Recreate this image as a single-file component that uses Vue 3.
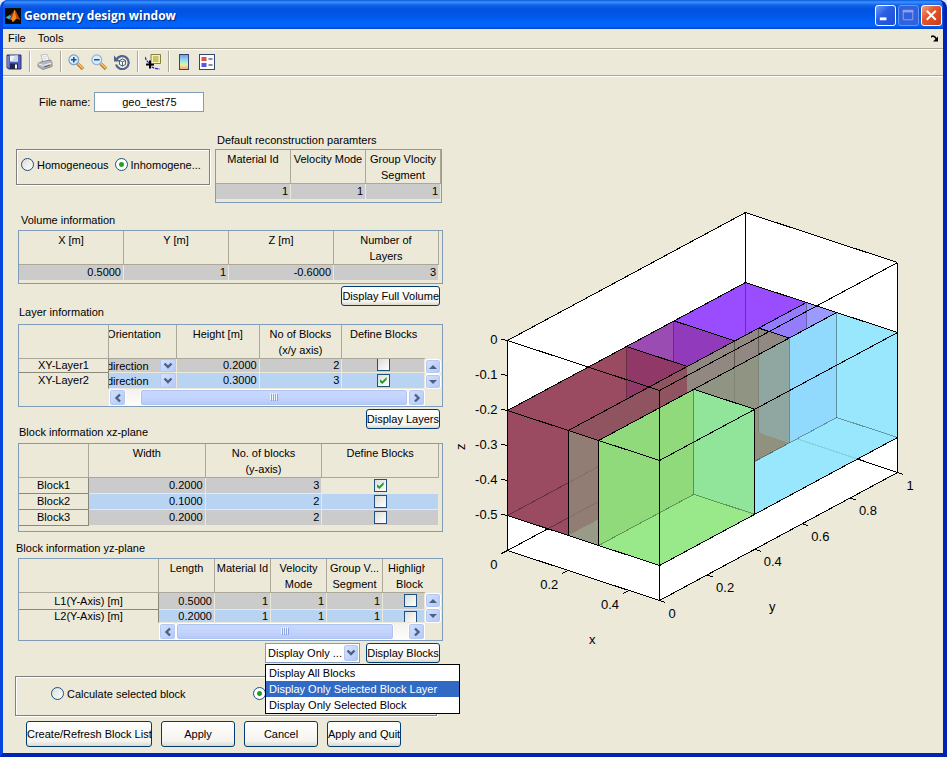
<script setup>
import { ref } from 'vue'

const fileName = ref('geo_test75')
const material = ref('inhomogeneous')
const scope = ref('all')
const view = ref('layer')

const viewOptions = [
  { id: 'all', label: 'Display All Blocks' },
  { id: 'layer', label: 'Display Only Selected Block Layer' },
  { id: 'block', label: 'Display Only Selected Block' }
]

const layers = ref([
  { name: 'XY-Layer1', height: '0.2000', blocks: 2, define: false },
  { name: 'XY-Layer2', height: '0.3000', blocks: 3, define: true }
])
const blocks = ref([
  { name: 'Block1', width: '0.2000', count: 3, define: true },
  { name: 'Block2', width: '0.1000', count: 2, define: false },
  { name: 'Block3', width: '0.2000', count: 2, define: false }
])
const segments = ref([
  { name: 'L1(Y-Axis) [m]', length: '0.5000', mark: false },
  { name: 'L2(Y-Axis) [m]', length: '0.2000', mark: false }
])

// Orthographic projection of volume coordinates (metres) to drawing units.
const px = (x, y) => 507.5 + 304 * x + 238 * y
const py = (x, y, z) => 340.5 + 100 * x - 128 * y - 350 * z
const pt = ([x, y, z]) => `${px(x, y).toFixed(1)},${py(x, y, z).toFixed(1)}`
const poly = (pts) => pts.map(pt).join(' ')
const top = (x0, x1, y0, y1) => poly([[x0, y0, -0.2], [x1, y0, -0.2], [x1, y1, -0.2], [x0, y1, -0.2]])
const front = (x0, x1) => poly([[x0, 0, -0.2], [x1, 0, -0.2], [x1, 0, -0.5], [x0, 0, -0.5]])

const faces = [
  { p: poly([[0, 0, 0], [0, 1, 0], [0.5, 1, 0], [0.5, 1, -0.6], [0.5, 0, -0.6], [0, 0, -0.6]]), f: '#ffffff' },
  { p: poly([[0.3, 0.4, -0.2], [0.3, 1, -0.2], [0.5, 1, -0.2], [0.5, 1, -0.5], [0.5, 0.4, -0.5]]), f: '#99e7fd' },
  { p: '789.1,338.1 836.7,312.5 836.7,417.5 789.1,443.1', f: '#92dafd' },
  { p: '693.9,389.3 758.7,354.5 758.7,459.4 693.9,494.3', f: '#909583' },
  { p: '758.7,354.5 789.1,338.1 789.1,443.1 758.7,432.5', f: '#90a6a0' },
  { p: '754.7,431.5 758.7,432.5 789.1,443.1 754.7,461.6', f: '#91917f' },
  { p: top(0.2, 0.3, 0.8, 1), f: '#937dfc' },
  { p: '806.3,302.5 836.7,312.5 806.3,328.8', f: '#9b9aff' },
  { p: top(0, 0.2, 0.7, 1), f: '#994dff' },
  { p: top(0, 0.2, 0.5, 0.7), f: '#9b4cb2' },
  { p: '674.1,320.9 734.9,340.9 687.3,366.5 674.1,362.2', f: '#913abc' },
  { p: top(0, 0.2, 0, 0.5), f: '#9b4b61' },
  { p: '626.5,346.5 687.3,366.5 626.5,399.2', f: '#903867' },
  { p: top(0.2, 0.3, 0, 0.8), f: '#918882' },
  { p: '568.3,430.5 687.3,366.5 687.3,392.8 598.7,440.5', f: '#8f5460' },
  { p: front(0, 0.2), f: '#9b4b61' },
  { p: front(0.2, 0.3), f: '#917d73' },
  { p: '568.3,535.5 598.7,519.2 598.7,545.5', f: '#979b88' },
  { p: poly([[0.3, 0, -0.2], [0.3, 0.4, -0.2], [0.5, 0.4, -0.2], [0.5, 0.4, -0.5], [0.5, 0, -0.5], [0.3, 0, -0.5]]), f: '#91da7b' },
  { p: poly([[0.3, 0.4, -0.2], [0.5, 0.4, -0.2], [0.5, 0.4, -0.5], [0.3, 0.4, -0.5]]), f: '#91e59b' },
  { p: poly([[0.3, 0, -0.5], [0.5, 0, -0.5], [0.5, 0.4, -0.5], [0.3, 0.4, -0.5]]), f: '#99e88a' }
]

const seg = (a, b) => ({ p: `${pt(a)} ${pt(b)}` })
const hidden = [
  { p: '626.5,346.5 626.5,399.5' },
  { p: '673.5,321.5 673.5,362.5' },
  { p: '745.5,282.5 745.5,335.5' },
  { p: '806.5,302.5 806.5,328.5' },
  { p: '734.5,341.5 734.5,366.5' },
  { p: '758.5,328.5 758.5,354.5' },
  seg([0.3, 0.8, -0.2], [0.3, 0.8, -0.5]),
  seg([0.3, 1, -0.2], [0.3, 1, -0.5]),
  seg([0.3, 1, -0.5], [0.5, 1, -0.5]),
  seg([0.3, 1, -0.5], [0.3, 0.656, -0.5]),
  seg([0.3, 0.4, -0.2], [0.3, 0.4, -0.5]),
  seg([0.3, 0.4, -0.5], [0.5, 0.4, -0.5]),
  seg([0.3, 0, -0.5], [0.3, 0.4, -0.5]),
  { p: '507.5,515.5 568.5,482.7' },
  { p: '547.5,529 568.5,517.7' }
]
const faint = [
  { p: '568.5,482.7 598.5,466.5' },
  { p: '568.5,517.7 598.5,501.6' },
  { p: '857.5,459 797.5,439' },
  { p: '734.5,366.5 734.5,402' },
  { p: '758.5,354.5 758.5,432.5' }
]
const edges = [
  seg([0, 0, 0], [0, 1, 0]), seg([0, 1, 0], [0.5, 1, 0]), seg([0.5, 1, 0], [0.5, 0, 0]), seg([0.5, 0, 0], [0, 0, 0]),
  seg([0, 0, 0], [0, 0, -0.6]), seg([0.5, 0, 0], [0.5, 0, -0.6]), seg([0.5, 1, 0], [0.5, 1, -0.6]), seg([0, 1, 0], [0, 1, -0.2]),
  seg([0, 0, -0.6], [0.5, 0, -0.6]), seg([0.5, 0, -0.6], [0.5, 1, -0.6]),
  seg([0, 0, -0.2], [0, 1, -0.2]), seg([0.2, 0, -0.2], [0.2, 1, -0.2]), seg([0.3, 0, -0.2], [0.3, 1, -0.2]), seg([0.5, 0, -0.2], [0.5, 1, -0.2]),
  seg([0, 0, -0.2], [0.5, 0, -0.2]), seg([0, 1, -0.2], [0.5, 1, -0.2]),
  seg([0, 0.5, -0.2], [0.2, 0.5, -0.2]), seg([0, 0.7, -0.2], [0.2, 0.7, -0.2]),
  seg([0.2, 0.8, -0.2], [0.3, 0.8, -0.2]), seg([0.3, 0.4, -0.2], [0.5, 0.4, -0.2]),
  seg([0.2, 0, -0.2], [0.2, 0, -0.5]), seg([0.3, 0, -0.2], [0.3, 0, -0.5]), seg([0.5, 0.4, -0.2], [0.5, 0.4, -0.5]),
  seg([0, 0, -0.5], [0.5, 0, -0.5]), seg([0.5, 0, -0.5], [0.5, 1, -0.5]),
  { p: '507.5,550.5 547.5,529' },
  { p: '897.5,472.5 857.5,459' }
]

const zTicks = [0, -0.1, -0.2, -0.3, -0.4, -0.5].map((v) => ({ v: String(v), x: px(0, 0), y: py(0, 0, v) }))
const xTicks = [0, 0.2, 0.4].map((v) => ({ v: String(v), x: px(v, 0), y: py(v, 0, -0.6) }))
const yTicks = [0, 0.2, 0.4, 0.6, 0.8, 1].map((v) => ({ v: String(v), x: px(0.5, v), y: py(0.5, v, -0.6) }))
</script>

<template>
  <div class="window">
    <header class="titlebar">
      <svg class="logo" viewBox="0 0 16 16" aria-hidden="true">
        <rect width="16" height="16" fill="#0a0a0a" />
        <path d="M0.5 9.5 L4.5 7 L6.5 8.5 L4.5 11.5Z" fill="#4aa7c4" />
        <path d="M4.5 7 Q7 6.5 9.5 1.5 L8.5 9 L6.5 12 L4.5 11.5 L6.5 8.5Z" fill="#a33a15" />
        <path d="M9.5 1.5 Q11 4 15 12 Q12.500 9.500 10.500 11.500 Q8.500 14 7.500 14 Q7 12 6 11 Q8 8 9.500 1.500Z" fill="#f28a1c" />
        <path d="M9.500 1.500 Q10 5 11.500 10.500 L15 12 Q11 4 9.500 1.500Z" fill="#c23d12" />
      </svg>
      <h1>Geometry design window</h1>
      <div class="winbtns">
        <button class="wb" aria-label="Minimize"><svg viewBox="0 0 20 20"><rect x="4" y="12" width="7" height="3" fill="#fff" /></svg></button>
        <button class="wb dim" aria-label="Maximize"><svg viewBox="0 0 20 20"><path d="M4.500 4.500h10v10h-10zM4 6h11" fill="none" stroke="#8fa3ee" stroke-width="1" /><path d="M4 4.500h11v2h-11z" fill="#8fa3ee" /></svg></button>
        <button class="wb close" aria-label="Close"><svg viewBox="0 0 20 20"><path d="M5 5l9.500 9.500M14.500 5L5 14.500" stroke="#fff" stroke-width="2.200" /></svg></button>
      </div>
    </header>

    <nav class="menubar">
      <button>File</button>
      <button>Tools</button>
      <svg class="dock" viewBox="0 0 8 7" aria-hidden="true"><path d="M0.500 2.500V1.500Q3 0 5.500 4" fill="none" stroke="#000" stroke-width="1.500" /><path d="M2 6.500h5v-5z" /></svg>
    </nav>

    <div class="toolbar">
      <button aria-label="Save">
        <svg viewBox="0 0 16 16"><path d="M1 1h14v14H2.500L1 13.500z" fill="#5560bd" stroke="#2b2f7c" /><rect x="4" y="1.500" width="8" height="6" fill="#eef3fb" /><path d="M9 1.500h3v6H6z" fill="#c3dcec" /><rect x="4" y="9.500" width="8" height="5.500" fill="#22264f" /><rect x="9" y="10.500" width="2" height="4" fill="#fff" /><path d="M2 2v11" stroke="#9aa2e6" /></svg>
      </button>
      <i class="sep"></i>
      <button aria-label="Print">
        <svg viewBox="0 0 16 16"><path d="M4 1l6-.5 2.500 6-6.500 1.500z" fill="#fff" stroke="#a9adb5" stroke-width=".8" /><path d="M5.500 3l4-.5M6.200 5l4-.7" stroke="#b8bcc4" stroke-width=".7" /><path d="M1 9.500L5 7.500l8.500-1.500L15 8.500v4L6 15.500 1 12.500z" fill="#b4b6bc" stroke="#777a82" stroke-width=".8" /><path d="M1.500 9.800L6 11.500l8.500-2.500" fill="none" stroke="#f3f3f5" /><path d="M7 13l6-1.800" stroke="#5e6168" stroke-width="1.200" /><circle cx="12.800" cy="10.500" r=".7" fill="#e7b93c" /></svg>
      </button>
      <i class="sep"></i>
      <button aria-label="Zoom In">
        <svg viewBox="0 0 16 16"><path d="M9.500 9.500L15 15" stroke="#b87a33" stroke-width="3.400" /><path d="M9.500 9L15 14.300" stroke="#f5b962" stroke-width="1.800" /><circle cx="5.800" cy="5.800" r="4.900" fill="#d5effb" stroke="#7fa0c5" stroke-width="1.200" /><path d="M3 5.800h5.600M5.800 3v5.600" stroke="#1e4f9b" stroke-width="1.600" /></svg>
      </button>
      <button aria-label="Zoom Out">
        <svg viewBox="0 0 16 16"><path d="M9.500 9.500L15 15" stroke="#b87a33" stroke-width="3.400" /><path d="M9.500 9L15 14.300" stroke="#f5b962" stroke-width="1.800" /><circle cx="5.800" cy="5.800" r="4.900" fill="#d5effb" stroke="#9db3cf" stroke-width="1.200" /><path d="M3 5.800h5.600" stroke="#1e4f9b" stroke-width="1.600" /></svg>
      </button>
      <button aria-label="Rotate 3D">
        <svg viewBox="0 0 16 16"><path d="M2.500 5.500A6.500 6.500 0 1 1 2 10.500" fill="none" stroke="#4f648a" stroke-width="2.200" /><path d="M0 1.500v6h6z" fill="#4f648a" /><path d="M5.500 6.500l3-1.500 3 1.500v4l-3 1.500-3-1.500zM5.500 6.500l3 1.300 3-1.300M8.500 8v4" fill="#f4f6fa" stroke="#3d5076" stroke-width=".9" /></svg>
      </button>
      <i class="sep"></i>
      <button aria-label="Data Cursor">
        <svg viewBox="0 0 16 16"><path d="M0 3q1 3 3 5t4 5q3 2 8 2" fill="none" stroke="#2020e0" stroke-width="1.200" stroke-dasharray="3 1" /><path d="M6 .5h9.500v9H9.500L6 12z" fill="#f8f3a4" stroke="#85803a" /><path d="M8 3h5.500M8 5h5.500M8 7h5.500" stroke="#8c8750" stroke-width=".9" /><path d="M1 10.500h8M5 6.500v8" stroke="#000" stroke-width="2" /></svg>
      </button>
      <i class="sep"></i>
      <button aria-label="Insert Colorbar">
        <svg viewBox="0 0 16 16"><defs><linearGradient id="cbar" x2="0" y2="1"><stop offset="0" stop-color="#8192e2" /><stop offset=".4" stop-color="#8fe3ea" /><stop offset=".7" stop-color="#f2eda0" /><stop offset="1" stop-color="#f0a075" /></linearGradient></defs><rect x="3.500" y=".5" width="9" height="15" fill="url(#cbar)" stroke="#34457a" /></svg>
      </button>
      <button aria-label="Insert Legend">
        <svg viewBox="0 0 16 16"><rect x=".5" y=".5" width="15" height="15" fill="#fbfbff" stroke="#34457a" /><rect x="2.500" y="3" width="5" height="4" fill="#e0504c" /><rect x="2.500" y="9" width="5" height="4" fill="#5559d8" /><path d="M9.500 5h4M9.500 11h4" stroke="#222" stroke-width="1.200" /></svg>
      </button>
    </div>

    <main class="content">
      <form class="controls" @submit.prevent>
        <div class="filerow">
          <label for="fname">File name:</label>
          <input id="fname" v-model="fileName" type="text" />
        </div>

        <div class="toprow">
          <div class="panel kind">
            <label><input v-model="material" type="radio" value="homogeneous" />Homogeneous</label>
            <label><input v-model="material" type="radio" value="inhomogeneous" />Inhomogene...</label>
          </div>
          <section class="defaults">
            <h2>Default reconstruction paramters</h2>
            <div class="sheet">
              <table>
                <thead><tr><th>Material Id</th><th class="nowrap">Velocity Mode</th><th>Group Vlocity Segment</th></tr></thead>
                <tbody><tr><td>1</td><td>1</td><td>1</td></tr></tbody>
              </table>
            </div>
          </section>
        </div>

        <div class="bar low"><h2>Volume information</h2></div>
        <div class="sheet inset">
          <table>
            <thead><tr><th>X [m]</th><th>Y [m]</th><th>Z [m]</th><th>Number of<br />Layers</th></tr></thead>
            <tbody><tr><td>0.5000</td><td>1</td><td>-0.6000</td><td>3</td></tr></tbody>
          </table>
        </div>

        <div class="bar spaced">
          <h2>Layer information</h2>
          <button class="btn">Display Full Volume</button>
        </div>
        <div class="sheet scrolling">
          <table>
            <colgroup><col class="c90" /><col class="c68" /><col /><col /><col /></colgroup>
            <thead>
              <tr><th></th><th><div class="slid">Orientation</div></th><th>Height [m]</th><th>No of Blocks<br />(x/y axis)</th><th class="last">Define Blocks</th></tr>
            </thead>
            <tbody>
              <tr v-for="(l, i) in layers" :key="l.name" :class="{ alt: i === 1, cut: i === 0 }">
                <th scope="row">{{ l.name }}</th>
                <td>
                  <div class="slid pick">
                    <select :aria-label="l.name + ' orientation'"><option>direction</option></select>
                    <span class="arrow"><svg viewBox="0 0 10 8"><path d="M1.500 1.500L5 5l3.500-3.500" /></svg></span>
                  </div>
                </td>
                <td>{{ l.height }}</td>
                <td>{{ l.blocks }}</td>
                <td class="mid"><input v-model="l.define" type="checkbox" :aria-label="l.name + ' define blocks'" /></td>
              </tr>
            </tbody>
          </table>
          <div class="vscroll">
            <button aria-label="Scroll up"><svg viewBox="0 0 8 6"><path d="M0 5l4-4 4 4z" /></svg></button>
            <button aria-label="Scroll down"><svg viewBox="0 0 8 6"><path d="M0 1l4 4 4-4z" /></svg></button>
          </div>
          <div class="hscroll from90">
            <button aria-label="Scroll left"><svg viewBox="0 0 8 10"><path class="chev" d="M6 1.500L2.500 5L6 8.500" /></svg></button>
            <span class="gap"></span>
            <span class="thumb"><i></i><i></i><i></i><i></i></span>
            <button aria-label="Scroll right"><svg viewBox="0 0 8 10"><path class="chev" d="M2 1.500L5.500 5L2 8.500" /></svg></button>
          </div>
        </div>

        <div class="bar">
          <h2>Block information xz-plane</h2>
          <button class="btn">Display Layers</button>
        </div>
        <div class="sheet inset tall">
          <table>
            <colgroup><col class="c70" /><col /><col /><col /></colgroup>
            <thead><tr><th></th><th>Width</th><th>No. of blocks<br />(y-axis)</th><th>Define Blocks</th></tr></thead>
            <tbody>
              <tr v-for="(b, i) in blocks" :key="b.name" :class="{ alt: i === 1 }">
                <th scope="row">{{ b.name }}</th>
                <td>{{ b.width }}</td>
                <td>{{ b.count }}</td>
                <td class="mid" :class="{ focus: b.define }"><input v-model="b.define" type="checkbox" :aria-label="b.name + ' define blocks'" /></td>
              </tr>
            </tbody>
          </table>
        </div>

        <div class="bar low flush"><h2>Block information yz-plane</h2></div>
        <div class="sheet scrolling">
          <table>
            <colgroup><col class="c140" /><col class="c56" /><col class="c56" /><col class="c56" /><col class="c56" /><col /></colgroup>
            <thead>
              <tr><th></th><th>Length</th><th class="nowrap">Material Id</th><th>Velocity<br />Mode</th><th class="nowrap">Group V...<br />Segment</th><th class="last"><div class="wide">Highlight<br />Block</div></th></tr>
            </thead>
            <tbody>
              <tr v-for="(s, i) in segments" :key="s.name" :class="{ alt: i === 1, cutlow: i === 1 }">
                <th scope="row">{{ s.name }}</th>
                <td>{{ s.length }}</td><td>1</td><td>1</td><td>1</td>
                <td class="mid"><div class="wide"><input v-model="s.mark" type="checkbox" :aria-label="s.name + ' highlight block'" /></div></td>
              </tr>
            </tbody>
          </table>
          <div class="vscroll">
            <button aria-label="Scroll up"><svg viewBox="0 0 8 6"><path d="M0 5l4-4 4 4z" /></svg></button>
            <button aria-label="Scroll down"><svg viewBox="0 0 8 6"><path d="M0 1l4 4 4-4z" /></svg></button>
          </div>
          <div class="hscroll from140">
            <button aria-label="Scroll left"><svg viewBox="0 0 8 10"><path class="chev" d="M6 1.500L2.500 5L6 8.500" /></svg></button>
            <span class="thumb"><i></i><i></i><i></i><i></i></span>
            <span class="gap"></span>
            <button aria-label="Scroll right"><svg viewBox="0 0 8 10"><path class="chev" d="M2 1.500L5.500 5L2 8.500" /></svg></button>
          </div>
        </div>

        <div class="viewrow">
          <div class="combo">
            <select v-model="view" aria-label="Blocks to display">
              <option value="layer">Display Only ...</option>
              <option value="all">Display All Blocks</option>
              <option value="block">Display Only Selected Block</option>
            </select>
            <span class="arrow"><svg viewBox="0 0 10 8"><path d="M1.500 1.500L5 5l3.500-3.500" /></svg></span>
            <ul class="popup" role="listbox" aria-label="Blocks to display">
              <li v-for="o in viewOptions" :key="o.id" role="option" :aria-selected="o.id === view" :class="{ sel: o.id === view }" @click="view = o.id">{{ o.label }}</li>
            </ul>
          </div>
          <button class="btn">Display Blocks</button>
        </div>

        <div class="panel scope">
          <label><input v-model="scope" type="radio" value="selected" />Calculate selected block</label>
          <input v-model="scope" type="radio" value="all" aria-label="Calculate all blocks" />
        </div>

        <div class="actions">
          <button class="btn wide2">Create/Refresh Block List</button>
          <button class="btn">Apply</button>
          <button class="btn">Cancel</button>
          <button class="btn">Apply and Quit</button>
        </div>
      </form>

      <figure class="plot">
        <svg viewBox="445 200 498 450" role="img" aria-label="Block geometry">
          <g shape-rendering="crispEdges">
            <polygon v-for="(f, i) in faces" :key="'f' + i" :points="f.p" :fill="f.f" />
            <polyline v-for="(l, i) in faint" :key="'n' + i" :points="l.p" class="ln faint" />
            <polyline v-for="(l, i) in hidden" :key="'h' + i" :points="l.p" class="ln hid" />
            <polyline v-for="(l, i) in edges" :key="'e' + i" :points="l.p" class="ln" />
            <line v-for="t in zTicks" :key="'zt' + t.v" :x1="t.x" :y1="t.y" :x2="t.x - 6" :y2="t.y - 1" class="ln" />
            <line v-for="t in xTicks" :key="'xt' + t.v" :x1="t.x" :y1="t.y" :x2="t.x - 6" :y2="t.y + 3" class="ln" />
            <line v-for="t in yTicks" :key="'yt' + t.v" :x1="t.x" :y1="t.y" :x2="t.x + 6" :y2="t.y + 2" class="ln" />
          </g>
          <g class="ticks">
            <text v-for="t in zTicks" :key="'z' + t.v" :x="t.x - 10" :y="t.y + 3" text-anchor="end">{{ t.v }}</text>
            <text v-for="t in xTicks" :key="'x' + t.v" :x="t.x - 10" :y="t.y + 18" text-anchor="end">{{ t.v }}</text>
            <text v-for="t in yTicks" :key="'y' + t.v" :x="t.x + 9" :y="t.y + 17">{{ t.v }}</text>
            <text x="589" y="644">x</text>
            <text x="769" y="611">y</text>
            <text x="465" y="450" transform="rotate(-90 465 450)">z</text>
          </g>
        </svg>
      </figure>
    </main>
  </div>
</template>

<style>
body {
  background: #dfe8f5;
}
</style>

<style scoped>
* {
  box-sizing: border-box;
}
.window {
  min-height: 100vh;
  display: flex;
  flex-direction: column;
  background: #0831d9;
  border: solid;
  border-width: 0 4px 4px 3px;
  border-color: #0a3fe0 #0023b4 #0023b4 #0845e0;
  border-radius: 8px 8px 0 0;
  font-family: "Liberation Sans", Arial, sans-serif;
  font-size: 11px;
  line-height: 16px;
  color: #000;
  overflow: hidden;
}
button,
input,
select {
  font: inherit;
  color: inherit;
  margin: 0;
}
.titlebar {
  display: flex;
  align-items: center;
  height: 29px;
  gap: 3px;
  margin: 0 -4px 0 -3px;
  padding: 2px 5px 0 5px;
  background: linear-gradient(#0a58da 0, #3a93ff 2px, #1562e8 5px, #0054e3 9px, #0055e5 14px, #0162fa 22px, #0365fc 26px, #0144d0 29px);
}
.logo {
  width: 16px;
  height: 16px;
}
h1 {
  margin: 0;
  font: bold 12px/18px "Open Sans", "Noto Sans", sans-serif;
  color: #fff;
  text-shadow: 1px 1px 1px #0a2a7c;
}
.winbtns {
  display: flex;
  gap: 2px;
  margin-left: auto;
}
.wb {
  width: 21px;
  height: 21px;
  padding: 0;
  border: 1px solid #fff;
  border-radius: 3px;
  background: linear-gradient(135deg, #6f9bf5, #2a5fe4 40%, #1d4fd2);
}
.wb svg {
  display: block;
  width: 19px;
  height: 19px;
}
.wb.dim {
  border-color: #6a93ee;
  background: #2f62dc;
}
.wb.close {
  background: linear-gradient(135deg, #f0a088, #e3562f 40%, #cf3b14);
}
.menubar {
  display: flex;
  align-items: center;
  height: 20px;
  padding: 0 4px 1px 5px;
  gap: 12px;
  background: #ece9d8;
  border-bottom: 1px solid #aca899;
}
.menubar button {
  padding: 0;
  border: 0;
  background: none;
}
.dock {
  width: 8px;
  height: 7px;
  margin-left: auto;
}
.toolbar {
  display: flex;
  align-items: center;
  gap: 7px;
  height: 27px;
  padding: 0 3px 2px;
  background: #ece9d8;
  border-top: 1px solid #fff;
  border-bottom: 1px solid #aca899;
}
.toolbar button {
  width: 16px;
  height: 16px;
  padding: 0;
  border: 0;
  background: none;
}
.toolbar svg {
  display: block;
  width: 16px;
  height: 16px;
}
.sep {
  width: 2px;
  height: 21px;
  margin-right: -1px;
  border-left: 1px solid #aca899;
  border-right: 1px solid #fff;
}
.content {
  flex: 1;
  display: grid;
  grid-template-columns: 442px minmax(0, 1fr);
  background: #ece9d8;
  border-top: 1px solid #fff;
}
.controls {
  padding: 15px 2px 6px 13px;
}
h2 {
  margin: 0;
  font-size: 11px;
  font-weight: normal;
  line-height: 14px;
}
.filerow {
  display: flex;
  align-items: center;
  gap: 4px;
  padding-left: 23px;
}
.filerow input {
  width: 110px;
  height: 20px;
  padding: 0;
  text-align: center;
  border: 1px solid #7f9db9;
  background: #fff;
}
.toprow {
  display: flex;
  align-items: flex-start;
  gap: 5px;
  margin: 21px 0 1px;
}
.panel {
  display: flex;
  border: 1px solid #808080;
  box-shadow: inset 1px 1px #fff, 1px 1px #fff;
}
.panel label {
  display: flex;
  align-items: center;
  gap: 3px;
}
.kind {
  width: 194px;
  height: 36px;
  margin-top: 16px;
  padding: 0 4px 5px;
  gap: 6px;
}
.defaults {
  width: 227px;
}
.defaults h2 {
  padding: 0 0 2px 2px;
}
.sheet {
  border: 1px solid #7f9db9;
}
.defaults .sheet {
  padding-bottom: 2px;
}
.inset {
  margin-left: 2px;
  padding: 0 3px 2px 0;
}
.tall {
  padding-bottom: 5px;
}
table {
  width: 100%;
  table-layout: fixed;
  border-spacing: 0;
}
th,
td {
  padding: 0 2px;
  font-weight: normal;
  overflow: hidden;
}
thead th {
  height: 34px;
  vertical-align: top;
  padding-top: 1px;
  border-right: 1px solid #aca899;
  border-bottom: 1px solid #aca899;
}
thead th.last {
  border-right: 0;
}
.nowrap {
  white-space: nowrap;
  padding-left: 0;
  padding-right: 0;
}
tbody th {
  height: 16px;
  line-height: 15px;
  border-right: 1px solid #8a877b;
  border-bottom: 1px solid #8a877b;
}
td {
  height: 16px;
  line-height: 15px;
  text-align: right;
  background: #cbcbcb;
  border-right: 1px solid #ece9d8;
  border-bottom: 1px solid #ece9d8;
}
.alt td {
  background: #b9d4f3;
}
td.mid {
  text-align: center;
  padding: 0;
}
td.focus {
  background: #ece9d8;
}
.c90 {
  width: 90px;
}
.c68 {
  width: 68px;
}
.c70 {
  width: 70px;
}
.c140 {
  width: 140px;
}
.c56 {
  width: 56px;
}
.bar {
  display: flex;
  justify-content: space-between;
  height: 36px;
}
.bar h2 {
  align-self: flex-end;
  padding: 0 0 4px 3px;
}
.bar .btn {
  margin: 2px 3px 0 0;
}
.bar.spaced {
  height: 40px;
}
.bar.spaced h2 {
  padding-bottom: 5px;
}
.bar.low {
  height: 26px;
}
.bar.low h2 {
  padding: 0 0 3px 5px;
}
.bar.flush h2 {
  padding-left: 0;
}
.btn {
  height: 20px;
  padding: 0;
  border: 1px solid #003c74;
  border-radius: 3px;
  background: linear-gradient(#fff, #f4f3ee 80%, #dcd8ca);
  white-space: nowrap;
}
.scrolling {
  display: grid;
  grid-template-columns: minmax(0, 1fr) 17px;
  margin-left: 2px;
}
.cut th,
.cut td {
  height: 14px;
  line-height: 13px;
}
.scrolling tbody tr:last-child th {
  border-bottom-color: transparent;
}
.slid {
  margin-left: -20px;
  width: 86px;
}
.pick {
  display: flex;
  width: 85px;
  height: 15px;
}
.cut .pick {
  height: 13px;
}
.pick select {
  flex: 1;
  min-width: 0;
  padding: 0 0 0 16px;
  border: 0;
  background: none;
  appearance: none;
  line-height: 14px;
}
.arrow {
  display: flex;
  align-items: center;
  justify-content: center;
  width: 16px;
  border: 1px solid #b4c8f0;
  border-radius: 2px;
  background: linear-gradient(135deg, #d8e3fd, #b4c9f8);
  pointer-events: none;
}
.arrow svg {
  width: 10px;
  height: 8px;
}
.arrow path,
.chev {
  fill: none;
  stroke: #4d6185;
  stroke-width: 2.4;
}
.wide {
  width: 55px;
  height: 15px;
  text-align: center;
}
th .wide {
  height: 32px;
  margin-left: -3px;
}
tr.cutlow th,
tr.cutlow td {
  height: 13px;
  line-height: 12px;
}
.cutlow .wide {
  height: 12px;
}
input[type='checkbox'] {
  appearance: none;
  position: relative;
  display: block;
  width: 13px;
  height: 13px;
  margin: 1px auto;
  border: 1px solid #1c5180;
  background: linear-gradient(135deg, #dcdcd7, #fff);
}
input[type='checkbox']:checked::after {
  content: '';
  position: absolute;
  inset: 2px;
  background: #21a121;
  clip-path: polygon(0 28%, 38% 60%, 100% 0, 100% 40%, 38% 100%, 0 68%);
}
.cut input[type='checkbox'] {
  height: 12px;
  margin: 0 auto 1px;
  border-top: 0;
}
.cutlow input[type='checkbox'] {
  height: 11px;
  margin: 0 auto;
  border-bottom: 0;
}
.cutlow .wide {
  padding-top: 1px;
}
input[type='radio'] {
  appearance: none;
  width: 13px;
  height: 13px;
  border: 1px solid #1c5180;
  border-radius: 50%;
  background: linear-gradient(135deg, #dcdcd7, #fff);
}
input[type='radio']:checked {
  background: radial-gradient(circle, #21a121 2px, #fff 3px);
}
.vscroll {
  display: flex;
  flex-direction: column;
  padding-top: 34px;
}
.vscroll button {
  flex: 1;
  width: 16px;
}
.vscroll button,
.hscroll button {
  display: flex;
  align-items: center;
  justify-content: center;
  padding: 0;
  border: 1px solid #fff;
  border-radius: 3px;
  background: linear-gradient(135deg, #d5e1fd, #b2c8f8);
  box-shadow: inset 0 0 0 1px #b4c8f4;
}
.vscroll svg {
  width: 8px;
  height: 6px;
  fill: #4d6185;
}
.hscroll {
  display: flex;
  height: 17px;
  background: linear-gradient(#f3f1ec, #fefefb);
}
.from90 {
  margin-left: 90px;
}
.from140 {
  margin-left: 140px;
}
.hscroll button {
  width: 17px;
}
.hscroll svg {
  width: 8px;
  height: 10px;
}
.gap {
  width: 14px;
}
.thumb {
  flex: 1;
  display: flex;
  align-items: center;
  justify-content: center;
  gap: 1px;
  border: 1px solid #fff;
  border-radius: 3px;
  background: linear-gradient(#c9d8fc, #c3d4fd 50%, #b5c8f6);
  box-shadow: inset 0 0 0 1px #b0c4f2;
}
.thumb i {
  width: 1px;
  height: 7px;
  background: #8ca5e0;
  box-shadow: -1px -1px #eef4fe;
}
.viewrow {
  display: flex;
  justify-content: flex-end;
  gap: 6px;
  padding: 2px 3px 0 0;
}
.combo {
  position: relative;
  display: flex;
  width: 95px;
  height: 20px;
  padding: 1px;
  border: 1px solid #7f9db9;
  background: #fff;
}
.viewrow .btn {
  width: 74px;
}
.combo select {
  flex: 1;
  min-width: 0;
  padding: 0 0 0 1px;
  border: 0;
  background: none;
  appearance: none;
}
.combo .arrow {
  width: 14px;
}
.popup {
  position: absolute;
  z-index: 2;
  top: 20px;
  left: -1px;
  width: 195px;
  margin: 0;
  padding: 0;
  list-style: none;
  border: 1px solid #000;
  background: #fff;
}
.popup li {
  padding-left: 3px;
  white-space: nowrap;
}
.popup .sel {
  background: #316ac5;
  color: #fff;
}
.scope {
  align-items: center;
  gap: 67px;
  width: 422px;
  height: 40px;
  margin: 13px 0 0 -1px;
  padding: 0 35px 5px;
}
.actions {
  display: flex;
  gap: 9px;
  margin-top: 5px;
  padding-left: 10px;
}
.actions .btn {
  width: 74px;
  height: 26px;
}
.actions .wide2 {
  width: 126px;
}
.plot {
  margin: 0;
  padding-top: 123px;
}
.plot svg {
  display: block;
  width: 100%;
  height: auto;
}
.ln {
  fill: none;
  stroke: #000;
  stroke-width: 1;
}
.hid {
  stroke-opacity: 0.35;
}
.faint {
  stroke-opacity: 0.1;
}
.ticks {
  font-size: 13px;
}
</style>
